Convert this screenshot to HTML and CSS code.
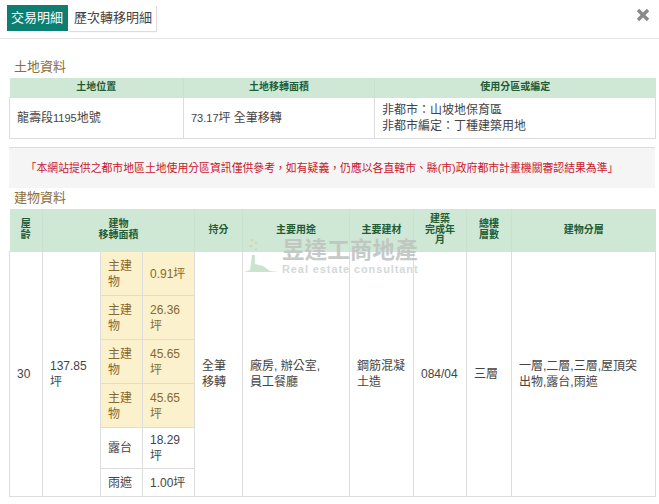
FILE: index.html
```html
<!DOCTYPE html>
<html lang="zh-Hant">
<head>
<meta charset="utf-8">
<title>交易明細</title>
<link rel="stylesheet" href="styles.css">
</head>
<body>
<header class="top">
  <nav class="tabs">
    <span class="tab active">交易明細</span>
    <span class="tab">歷次轉移明細</span>
  </nav>
  <svg class="close" viewBox="0 0 14 14" width="14" height="14"><path d="M2 2L12 12M12 2L2 12" fill="none" stroke="#8a8a8a" stroke-width="3.4"/></svg>
</header>
<main class="content">
  <h2 class="title land-title">土地資料</h2>
  <table class="grid land">
    <colgroup><col class="l1"><col class="l2"><col class="l3"></colgroup>
    <thead><tr><th>土地位置</th><th>土地移轉面積</th><th>使用分區或編定</th></tr></thead>
    <tbody><tr>
      <td>龍壽段<span class="lat-s">1195</span>地號</td>
      <td><span class="lat-s">73.17</span>坪 全筆移轉</td>
      <td>非都市：山坡地保育區<br>非都市編定：丁種建築用地</td>
    </tr></tbody>
  </table>
  <p class="note">「本網站提供之都市地區土地使用分區資訊僅供參考，如有疑義，仍應以各直轄市、縣(市)政府都市計畫機關審認結果為準」</p>
  <h2 class="title build-title">建物資料</h2>
  <table class="grid build">
    <colgroup>
      <col class="b1"><col class="b2"><col class="b3"><col class="b4"><col class="b5">
      <col class="b6"><col class="b7"><col class="b8"><col class="b9"><col class="b10">
    </colgroup>
    <thead><tr>
      <th>屋<br>齡</th><th colspan="3">建物<br>移轉面積</th><th>持分</th><th>主要用途</th><th>主要建材</th>
      <th>建築<br>完成年<br>月</th><th>總樓<br>層數</th><th>建物分層</th>
    </tr></thead>
    <tbody>
      <tr class="r44">
        <td rowspan="6">30</td>
        <td rowspan="6">137.85<br>坪</td>
        <td class="hl">主建物</td><td class="hl">0.91坪</td>
        <td rowspan="6">全筆移轉</td>
        <td rowspan="6">廠房, 辦公室,<br>員工餐廳</td>
        <td rowspan="6">鋼筋混凝土造</td>
        <td rowspan="6">084/04</td>
        <td rowspan="6">三層</td>
        <td rowspan="6">一層,二層,三層,屋頂突出物,露台,雨遮</td>
      </tr>
      <tr class="r44"><td class="hl">主建物</td><td class="hl">26.36坪</td></tr>
      <tr class="r44"><td class="hl">主建物</td><td class="hl">45.65坪</td></tr>
      <tr class="r44"><td class="hl">主建物</td><td class="hl">45.65坪</td></tr>
      <tr class="r41"><td>露台</td><td>18.29坪</td></tr>
      <tr class="r28"><td>雨遮</td><td>1.00坪</td></tr>
    </tbody>
  </table>
</main>
<div class="mark">
  <svg class="mark-icon" viewBox="0 0 36 36" width="36" height="36">
    <path d="M9 18H12V27L20 29L27 34L36 35H1L7 33Z" fill="#c6e2ca"/>
    <circle cx="9" cy="3" r="1.3" fill="#ddd39a"/><circle cx="13" cy="6" r="1.3" fill="#c6dcbd"/>
    <circle cx="8" cy="9" r="1.3" fill="#d5d3a4"/><circle cx="13" cy="12" r="1.3" fill="#c6dcbd"/>
  </svg>
  <div class="mark-text">
    <div class="mark-zh">昱達工商地產</div>
    <div class="mark-en">Real estate consultant</div>
  </div>
</div>
</body>
</html>
```
FILE: styles.css
```css
html, body {
  margin: 0;
  padding: 0;
  height: 100%;
  overflow: hidden;
  background: #fff;
}
body {
  position: relative;
  font-family: "Liberation Sans", "Noto Sans CJK TC", sans-serif;
  font-size: 12px;
  line-height: 16px;
  color: #444;
}
.top {
  display: flex;
  justify-content: space-between;
  align-items: flex-start;
  padding: 4px 9px 0 7px;
  box-sizing: border-box;
  border-bottom: 1px solid #e5e5e5;
  height: 39px;
}
.tabs {
  display: flex;
}
.tab {
  height: 26px;
  margin-top: 1px;
  padding: 0 4px 0 6px;
  line-height: 26px;
  font-size: 13px;
  color: #444;
  background: #fff;
  box-shadow: 1px 1px 1px #ddd;
}
.tab.active {
  width: 53px;
  padding: 0 4px;
  color: #fff;
  background: #0d7f72;
  box-shadow: none;
}
.close {
  margin-top: 4px;
}
.content {
  padding: 0 4px 0 9px;
}
.title {
  margin: 0;
  font-size: 13px;
  font-weight: normal;
  line-height: 18px;
  color: #8a6d3b;
  padding-left: 5px;
}
.land-title {
  padding-top: 19px;
  padding-bottom: 2px;
}
.build-title {
  padding-top: 1px;
  padding-bottom: 2px;
}
.grid {
  width: 646px;
  table-layout: fixed;
  border-collapse: collapse;
}
.grid th {
  background: #cfe8d5;
  color: #1f5c36;
  font-size: 10px;
  line-height: 10.5px;
  font-weight: bold;
  text-align: center;
  vertical-align: middle;
  padding: 0 2px;
}
.grid td {
  border: 1px solid #ddd;
  padding: 0 7px;
  vertical-align: middle;
  text-align: left;
}
.grid thead th {
  border: 0;
  border-left: 1px solid #c9e2cf;
}
.grid thead th:first-child {
  border-left: 0;
}
.land thead tr { height: 19px; }
.land tbody tr { height: 41px; }
.land tbody td { padding-top: 1px; }
.l1 { width: 174px; }
.l2 { width: 191px; }
.l3 { width: 281px; }
.build thead tr { height: 43px; }
.b1 { width: 33px; }
.b2 { width: 58px; }
.b3 { width: 42px; }
.b4 { width: 52px; }
.b5 { width: 48px; }
.b6 { width: 107px; }
.b7 { width: 64px; }
.b8 { width: 53px; }
.b9 { width: 45px; }
.b10 { width: 144px; }
.r44 { height: 44px; }
.r41 { height: 41px; }
.r28 { height: 28px; }
.grid td.hl {
  background: #fcf1cd;
  color: #85692e;
}
.lat-s {
  font-size: 11px;
}
.note {
  margin: 8px 0 0;
  height: 40px;
  line-height: 40px;
  padding-right: 20px;
  background: #f5f5f5;
  border-top: 1px solid #ddd;
  color: #c9152b;
  font-size: 10.85px;
  text-align: center;
  white-space: nowrap;
}
.mark {
  position: absolute;
  left: 243px;
  top: 237px;
  display: flex;
  align-items: flex-start;
  gap: 3px;
  opacity: 0.9;
  pointer-events: none;
}
.mark-text {
  color: #bfc4c2;
  font-weight: bold;
}
.mark-zh {
  font-size: 22.6px;
  line-height: 27px;
}
.mark-en {
  font-size: 11px;
  line-height: 11px;
  letter-spacing: 0.9px;
  color: #cfd6d2;
  white-space: nowrap;
}
```
